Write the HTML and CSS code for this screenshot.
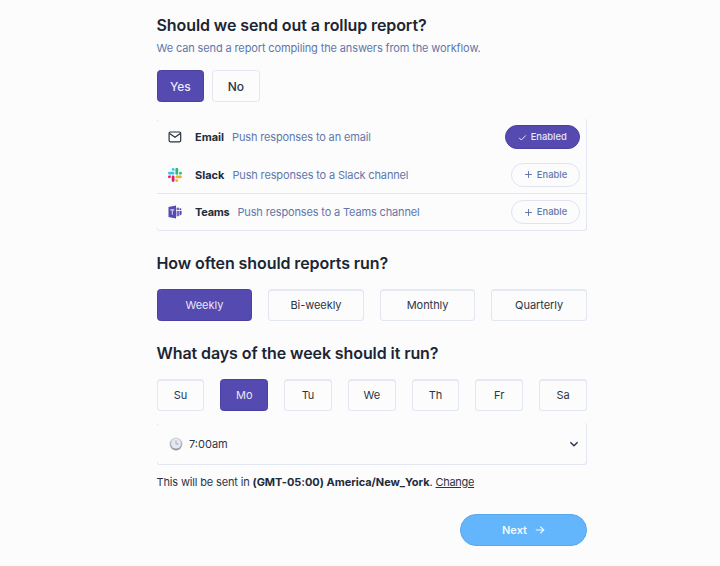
FILE: index.html
```html
<!DOCTYPE html>
<html lang="en">
<head>
<meta charset="utf-8">
<title>Rollup report</title>
<link rel="stylesheet" href="styles.css">
</head>
<body>
<main class="form">
  <h2>Should we send out a rollup report?</h2>
  <p class="hint">We can send a report compiling the answers from the workflow.</p>
  <div class="choices">
    <button class="option strong selected">Yes</button>
    <button class="option strong">No</button>
  </div>

  <div class="panel channels">
    <div class="channel">
      <svg class="icon" viewBox="0 0 14 14"><rect x="1.1" y="2" width="11.6" height="9.8" rx="1.2" fill="none" stroke="#272f3f" stroke-width="1.2"/><path d="M1.6 3.6 7 7.2l5.3-3.6" fill="none" stroke="#272f3f" stroke-width="1.2"/></svg>
      <b>Email</b><span class="desc">Push responses to an email</span>
      <button class="pill on"><svg viewBox="0 0 10 10"><path d="m1.2 5.3 2.5 2.5 5-5.1"/></svg>Enabled</button>
    </div>
    <div class="channel">
      <svg class="icon" viewBox="0 0 54 54"><path fill="#36c5f0" d="M19.7.1a5.4 5.4 0 0 0 0 10.8h5.4V5.5A5.4 5.4 0 0 0 19.7.1m0 14.4H5.4a5.4 5.4 0 0 0 0 10.8h14.3a5.4 5.4 0 0 0 0-10.8"/><path fill="#2eb67d" d="M53.8 19.9a5.4 5.4 0 1 0-10.8 0v5.4h5.4a5.4 5.4 0 0 0 5.4-5.4m-14.4 0V5.5a5.4 5.4 0 1 0-10.7 0v14.4a5.4 5.4 0 1 0 10.7 0"/><path fill="#ecb22e" d="M34.1 54a5.4 5.4 0 1 0 0-10.8h-5.4v5.4a5.4 5.4 0 0 0 5.4 5.4m0-14.4h14.3a5.4 5.4 0 0 0 0-10.8H34.1a5.4 5.4 0 0 0 0 10.8"/><path fill="#e01e5a" d="M0 34.2a5.4 5.4 0 1 0 10.8 0v-5.4H5.4A5.4 5.4 0 0 0 0 34.2m14.3 0v14.4a5.4 5.4 0 1 0 10.8 0V34.2a5.4 5.4 0 1 0-10.8 0"/></svg>
      <b>Slack</b><span class="desc">Push responses to a Slack channel</span>
      <button class="pill"><svg viewBox="0 0 10 10"><path d="M5 1.2v7.6M1.2 5h7.6"/></svg>Enable</button>
    </div>
    <div class="channel">
      <svg class="icon" viewBox="0 0 14 14"><path fill="#544aaf" d="M.5 2 8 .6v12.8L.5 12z"/><path d="M2.3 4.9h4M4.3 4.9v4.8" stroke="#d6d3ee" stroke-width="1.1"/><circle cx="9.8" cy="3.9" r="1.4" fill="#6f67bd"/><circle cx="12.4" cy="4.2" r="1" fill="#544aaf"/><path fill="#7770c2" d="M8.5 6h2.8v4.2q-.5 1.2-2.8 1.2z"/><path fill="#544aaf" d="M11.6 6h2v3q-.3 1.2-2 1.3z"/></svg>
      <b class="tight">Teams</b><span class="desc">Push responses to a Teams channel</span>
      <button class="pill"><svg viewBox="0 0 10 10"><path d="M5 1.2v7.6M1.2 5h7.6"/></svg>Enable</button>
    </div>
  </div>

  <h2 class="often">How often should reports run?</h2>
  <div class="choices spread">
    <button class="option selected">Weekly</button>
    <button class="option">Bi-weekly</button>
    <button class="option">Monthly</button>
    <button class="option">Quarterly</button>
  </div>

  <h2 class="days">What days of the week should it run?</h2>
  <div class="choices spread">
    <button class="option">Su</button>
    <button class="option selected">Mo</button>
    <button class="option">Tu</button>
    <button class="option">We</button>
    <button class="option">Th</button>
    <button class="option">Fr</button>
    <button class="option">Sa</button>
  </div>

  <div class="panel time">
    <svg class="clock" viewBox="0 0 14 14"><defs><linearGradient id="rim" x1="0" y1="0" x2="0" y2="1"><stop offset="0" stop-color="#d3d6df"/><stop offset="1" stop-color="#8f95a5"/></linearGradient></defs><circle cx="7" cy="7" r="6.4" fill="url(#rim)"/><circle cx="7" cy="6.7" r="4.9" fill="#e6e8ef"/><path d="M7 3.5V7h2.5" fill="none" stroke="#a1a6b7" stroke-width=".9"/></svg>
    <span>7:00am</span>
    <svg class="chevron" viewBox="0 0 10 10"><path d="M1.4 3.3 5 6.8l3.6-3.5" fill="none" stroke="#2b3445" stroke-width="1.4"/></svg>
  </div>
  <p class="zone">This will be sent in <b>(GMT-05:00) America/New_York</b>. <a>Change</a></p>

  <div class="actions">
    <button class="next">Next<svg viewBox="0 0 10 10"><path d="M.8 5h8M5.4 1.6 8.8 5 5.4 8.4"/></svg></button>
  </div>
</main>
</body>
</html>
```
FILE: styles.css
```css
* { box-sizing: border-box; }
body { margin: 0; background: #fcfcfc; color: #2b3547; font: 11px/16px Inter, sans-serif; }
.form { width: 430.5px; margin: 0 0 0 156.5px; padding-top: 14px; }
h2 { margin: 0; font-size: 16px; line-height: 22px; font-weight: 600; letter-spacing: -.09px; color: #1c2534; }
.hint { margin: 4px 0 14px; color: #6177ab; letter-spacing: -.125px; }
button { font: inherit; padding: 0; background: transparent; color: inherit; }
.choices { display: flex; gap: 8px; height: 32px; }
.option { border: 1px solid #e1e6f2; border-radius: 3.5px; letter-spacing: -.05px; font-weight: 400; }
.strong { width: 47.5px; font-size: 12px; font-weight: 550; padding-top: 1px; }
.selected { background: #544aaf; border-color: #4b40a6; color: #e9e7fb; }
.spread { gap: 15.8px; margin-top: 15px; }
.spread .option { flex: 1 1 0; border-top: 2px solid #e4e9f4; padding-bottom: 2px; }
.spread .selected { border-top: 1px solid #4b40a6; padding-bottom: 1px; }

.panel { position: relative; border-right: 1px solid #e1e6f2; border-bottom: 1px solid #e1e6f2; border-radius: 3px; }
.panel::before, .panel::after { content: ""; position: absolute; left: 0; width: 1px; height: 1px; background: #dfe2e9; }
.panel::before { top: 1px; }
.panel::after { bottom: 1px; }
.channels { margin-top: 17px; height: 112px; }
.channel { display: flex; align-items: center; height: 37px; padding: 0 6px 0 11.5px; }
.channel:first-child { height: 36px; margin-bottom: 1px; }
.channel:nth-child(2) { height: 38px; border-bottom: 1px solid #e1e6f2; }
.channel:nth-child(3) { height: 36px; }
.icon { width: 14px; height: 14px; margin-right: 13px; }
.channel b { font-weight: 700; color: #222b3a; }
.channel .tight { letter-spacing: -.25px; }
.desc { margin-left: 8px; color: #6177ab; letter-spacing: -.15px; }
.pill { display: flex; align-items: center; justify-content: center; gap: 4px; width: 69px; height: 24px; margin-left: auto; border: 1px solid #dfe4f0; border-radius: 12px; font-size: 9.4px; font-weight: 500; color: #6177ab; }
.pill svg { width: 9px; height: 9px; fill: none; stroke: currentColor; stroke-width: 1.1; }
.on { width: 75.5px; background: #544aaf; border-color: #4b40a6; color: #e9e7fb; }

.often { margin-top: 21px; }
.days { margin-top: 21px; }
.time { display: flex; align-items: center; height: 42px; margin-top: 12px; padding: 0 7px 0 12px; }
.clock { width: 14px; height: 14px; margin-right: 6.5px; }
.chevron { width: 10px; height: 10px; margin-left: auto; }
.zone { margin: 9px 0 24px; letter-spacing: -.15px; white-space: nowrap; }
.zone b { letter-spacing: -.03px; color: #222b3a; }
.zone a { text-decoration: underline; letter-spacing: -.3px; }
.actions { display: flex; justify-content: flex-end; }
.next { display: flex; align-items: center; justify-content: center; gap: 8px; width: 127px; height: 32px; border: 1px solid #56a9ec; border-radius: 16px; background: #63b6fb; color: #f3faff; font-weight: 600; }
.next svg { width: 10px; height: 10px; fill: none; stroke: currentColor; stroke-width: 1.1; }
```
